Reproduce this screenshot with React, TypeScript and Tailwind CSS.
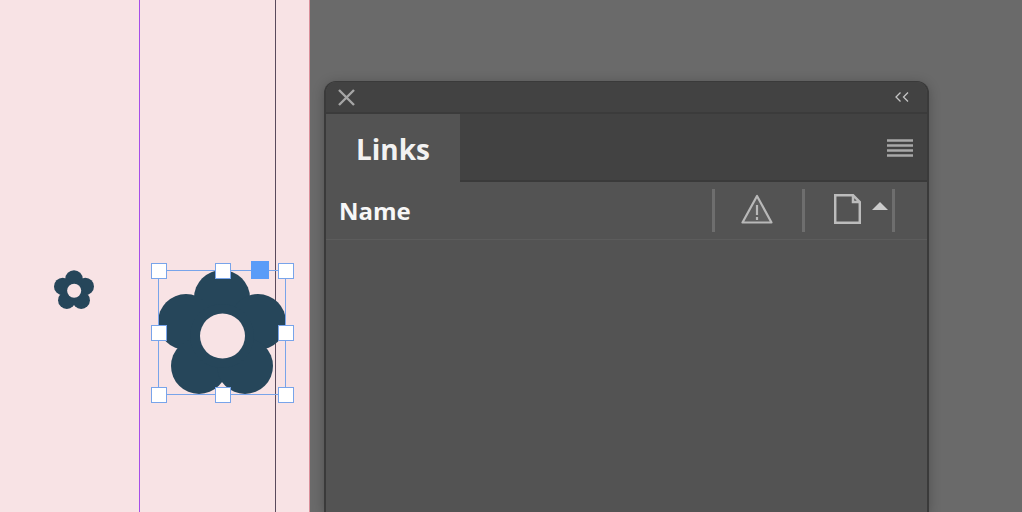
const handles = [
  "left-[151px] top-[263px]",
  "left-[215px] top-[263px]",
  "left-[278px] top-[263px]",
  "left-[151px] top-[325px]",
  "left-[278px] top-[325px]",
  "left-[151px] top-[387px]",
  "left-[215px] top-[387px]",
  "left-[278px] top-[387px]",
];

// five overlapping petals, the hole is just a circle in the artboard colour
const Flower = ({ className }: { className: string }) => (
  <svg viewBox="0 0 128 124" className={className}>
    <g fill="#26465a">
      <circle cx="64" cy="28" r="28" />
      <circle cx="28" cy="52" r="28" />
      <circle cx="100" cy="52" r="28" />
      <circle cx="41" cy="96" r="28" />
      <circle cx="87" cy="96" r="28" />
      <circle cx="64" cy="66" r="32" />
    </g>
    <circle cx="64.500" cy="66" r="22.500" fill="#f8e3e5" />
  </svg>
);

const Canvas = () => (
  <div className="relative h-full w-[310px] shrink-0 border-r border-[#d98f9a] bg-[#f8e3e5]">
    <div className="absolute left-[139px] top-0 h-full w-px bg-[#a64ee8]" />
    <div className="absolute left-[275px] top-0 h-full w-px bg-[#5a4a5c]" />
    <Flower className="absolute left-[54px] top-[270px] h-[39px] w-[40px]" />
    <Flower className="absolute left-[158px] top-[270px] h-[124px] w-[128px]" />
    <div className="absolute left-[158px] top-[270px] h-[125px] w-[128px] border border-[#78a4ea]" />
    {handles.map((pos) => (
      <div
        key={pos}
        className={`absolute h-[16px] w-[16px] border border-[#78a4ea] bg-white ${pos}`}
      />
    ))}
    <div className="absolute left-[251px] top-[261px] h-[18px] w-[18px] bg-[#5a9cf8]" />
  </div>
);

const Divider = () => <div className="h-[43px] w-[3px] shrink-0 bg-[#6e6e6e]" />;

const Panel = () => (
  <div className="flex h-[431px] w-[605px] flex-col overflow-hidden rounded-t-[12px] border-x-2 border-t border-[#3a3a3a] bg-[#535353] shadow-[0_2px_12px_rgba(0,0,0,0.25)]">
    <div className="flex h-[32px] shrink-0 items-center justify-between border-b-2 border-[#3b3b3b] bg-[#424242] pl-[12px] pr-[18px]">
      <svg viewBox="0 0 17 17" className="h-[17px] w-[17px]" fill="none" stroke="#a6a6a6" strokeWidth="2.4">
        <path d="M1 1l15 15M16 1L1 16" />
      </svg>
      <svg viewBox="0 0 14 10" className="h-[10px] w-[14px]" fill="none" stroke="#c4c4c4" strokeWidth="1.3">
        <path d="M5.500 0.500L1 5l4.500 4.500M13 0.500L8.500 5l4.500 4.500" />
      </svg>
    </div>
    <div className="flex h-[68px] shrink-0 items-stretch justify-between bg-[#424242]">
      <div className="flex w-[134px] items-center justify-center bg-[#535353] pt-[2px] font-['Open_Sans',sans-serif] text-[28px] font-bold text-[#f2f2f2]">
        Links
      </div>
      <div className="flex flex-1 items-center justify-end border-b-2 border-[#3a3a3a] pr-[14px] pt-[2px]">
        <svg viewBox="0 0 26 18" className="h-[18px] w-[26px]" fill="none" stroke="#a8a8a8" strokeWidth="2.500">
          <path d="M0 1.500h26M0 6.500h26M0 11.500h26M0 16.500h26" />
        </svg>
      </div>
    </div>
    <div className="flex h-[58px] shrink-0 items-center border-b border-[#5c5c5c]">
      <div className="flex-1 pl-[13px] font-['Open_Sans',sans-serif] text-[24px] font-bold text-[#f7f7f7]">
        Name
      </div>
      <Divider />
      <div className="flex w-[87px] items-center pl-[26px]">
        <svg viewBox="0 0 32 30" className="mb-[3px] h-[30px] w-[32px]" fill="none" stroke="#b8b8b8" strokeWidth="2.200">
          <path d="M16 2L1.500 28.500h29Z" fill="#5e5e5e" strokeLinejoin="round" />
          <path d="M16 11v10M16 23v3" />
        </svg>
      </div>
      <Divider />
      <div className="flex w-[87px] items-center pl-[29px]">
        <svg viewBox="0 0 27 30" className="mb-[3px] h-[30px] w-[27px]" fill="none" stroke="#bcbcbc" strokeWidth="2.500">
          <path d="M1.200 1.200h17.800l6.800 6.800v20.800H1.200ZM19 1.200v6.800h6.800" />
        </svg>
        <svg viewBox="0 0 16 8" className="mb-[10px] ml-[11px] h-[8px] w-[16px]" fill="#cccccc">
          <path d="M8 0l8 8H0Z" />
        </svg>
      </div>
      <Divider />
      <div className="w-[32px] shrink-0" />
    </div>
    <div className="flex-1" />
  </div>
);

export default function App() {
  return (
    <div className="flex h-[512px] w-[1022px] overflow-hidden bg-[#6a6a6a]">
      <Canvas />
      <div className="pl-[14px] pt-[81px]">
        <Panel />
      </div>
    </div>
  );
}
